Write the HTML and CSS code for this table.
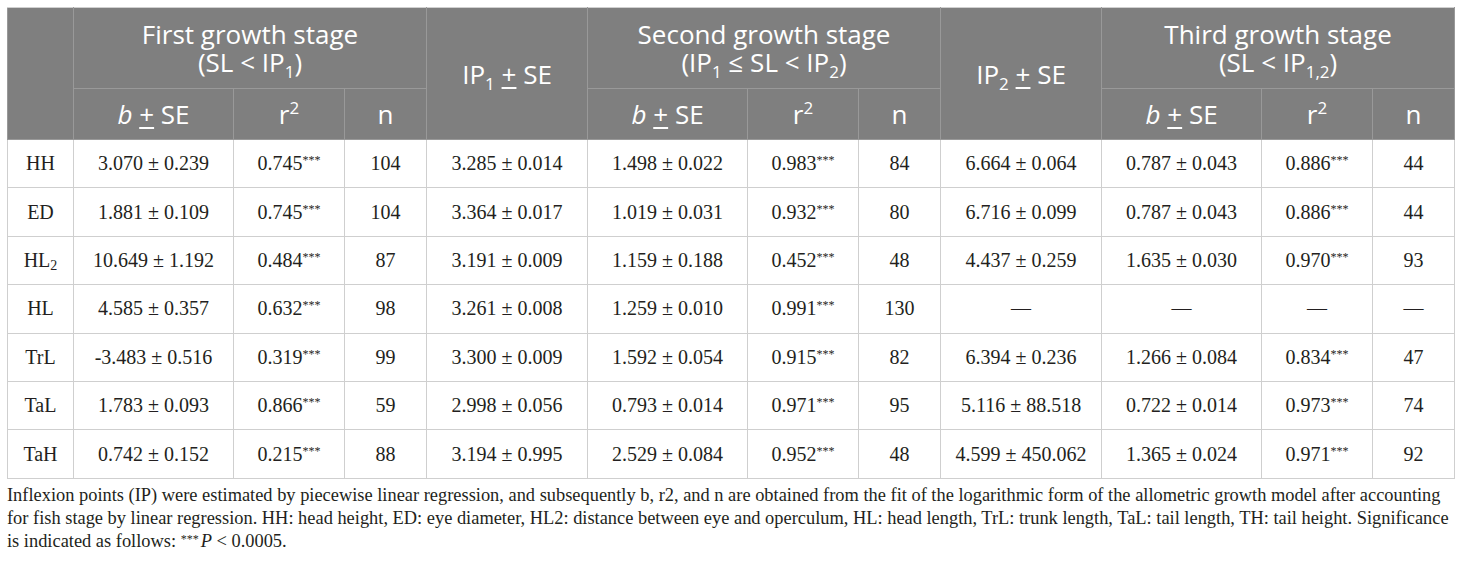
FILE: index.html
```html
<!DOCTYPE html>
<html lang="en">
<head>
  <meta charset="UTF-8">
  <title>Allometric growth table</title>
  <link rel="stylesheet" href="styles.css">
</head>
<body>
  <div class="wrap">
    <table class="growth">
      <colgroup>
        <col class="c-name">
        <col class="c-b"><col class="c-r"><col class="c-n">
        <col class="c-ip">
        <col class="c-b"><col class="c-r"><col class="c-n">
        <col class="c-ip">
        <col class="c-b"><col class="c-r"><col class="c-n">
      </colgroup>
      <thead>
        <tr class="head-top">
          <th rowspan="2"></th>
          <th colspan="3">First growth stage<br>(SL &lt; IP<sub>1</sub>)</th>
          <th rowspan="2">IP<sub>1</sub> <u>+</u> SE</th>
          <th colspan="3">Second growth stage<br>(IP<sub>1</sub> &le; SL &lt; IP<sub>2</sub>)</th>
          <th rowspan="2">IP<sub>2</sub> <u>+</u> SE</th>
          <th colspan="3">Third growth stage<br>(SL &lt; IP<sub>1,2</sub>)</th>
        </tr>
        <tr class="head-sub">
          <th><i>b</i> <u>+</u> SE</th><th>r<sup>2</sup></th><th>n</th>
          <th><i>b</i> <u>+</u> SE</th><th>r<sup>2</sup></th><th>n</th>
          <th><i>b</i> <u>+</u> SE</th><th>r<sup>2</sup></th><th>n</th>
        </tr>
      </thead>
      <tbody>
        <tr>
          <td>HH</td><td>3.070 ± 0.239</td><td>0.745<sup>***</sup></td><td>104</td>
          <td>3.285 ± 0.014</td><td>1.498 ± 0.022</td><td>0.983<sup>***</sup></td><td>84</td>
          <td>6.664 ± 0.064</td><td>0.787 ± 0.043</td><td>0.886<sup>***</sup></td><td>44</td>
        </tr>
        <tr>
          <td>ED</td><td>1.881 ± 0.109</td><td>0.745<sup>***</sup></td><td>104</td>
          <td>3.364 ± 0.017</td><td>1.019 ± 0.031</td><td>0.932<sup>***</sup></td><td>80</td>
          <td>6.716 ± 0.099</td><td>0.787 ± 0.043</td><td>0.886<sup>***</sup></td><td>44</td>
        </tr>
        <tr>
          <td>HL<sub>2</sub></td><td>10.649 ± 1.192</td><td>0.484<sup>***</sup></td><td>87</td>
          <td>3.191 ± 0.009</td><td>1.159 ± 0.188</td><td>0.452<sup>***</sup></td><td>48</td>
          <td>4.437 ± 0.259</td><td>1.635 ± 0.030</td><td>0.970<sup>***</sup></td><td>93</td>
        </tr>
        <tr>
          <td>HL</td><td>4.585 ± 0.357</td><td>0.632<sup>***</sup></td><td>98</td>
          <td>3.261 ± 0.008</td><td>1.259 ± 0.010</td><td>0.991<sup>***</sup></td><td>130</td>
          <td>—</td><td>—</td><td>—</td><td>—</td>
        </tr>
        <tr>
          <td>TrL</td><td>-3.483 ± 0.516</td><td>0.319<sup>***</sup></td><td>99</td>
          <td>3.300 ± 0.009</td><td>1.592 ± 0.054</td><td>0.915<sup>***</sup></td><td>82</td>
          <td>6.394 ± 0.236</td><td>1.266 ± 0.084</td><td>0.834<sup>***</sup></td><td>47</td>
        </tr>
        <tr>
          <td>TaL</td><td>1.783 ± 0.093</td><td>0.866<sup>***</sup></td><td>59</td>
          <td>2.998 ± 0.056</td><td>0.793 ± 0.014</td><td>0.971<sup>***</sup></td><td>95</td>
          <td>5.116 ± 88.518</td><td>0.722 ± 0.014</td><td>0.973<sup>***</sup></td><td>74</td>
        </tr>
        <tr>
          <td>TaH</td><td>0.742 ± 0.152</td><td>0.215<sup>***</sup></td><td>88</td>
          <td>3.194 ± 0.995</td><td>2.529 ± 0.084</td><td>0.952<sup>***</sup></td><td>48</td>
          <td>4.599 ± 450.062</td><td>1.365 ± 0.024</td><td>0.971<sup>***</sup></td><td>92</td>
        </tr>
      </tbody>
    </table>
    <p class="note">Inflexion points (IP) were estimated by piecewise linear regression, and subsequently b, r2, and n are obtained from the fit of the logarithmic form of the allometric growth model after accounting for fish stage by linear regression. HH: head height, ED: eye diameter, HL2: distance between eye and operculum, HL: head length, TrL: trunk length, TaL: tail length, TH: tail height. Significance is indicated as follows: <span class="stars">***</span><i>P</i> &lt; 0.0005.</p>
  </div>
</body>
</html>
```

FILE: styles.css
```css
body {
  margin: 0;
  background-color: #fff;
  color: #231f20;
}
.wrap {
  padding: 7px;
}
.growth {
  width: 1446px;
  border-collapse: collapse;
  table-layout: fixed;
  font-family: "Liberation Serif", serif;
  font-size: 20px;
}
.c-name { width: 66px; }
.c-b { width: 160px; }
.c-r { width: 111px; }
.c-n { width: 82px; }
.c-ip { width: 161px; }

.growth th {
  background-color: #7f7f7f;
  color: #fff;
  font-family: "Open Sans", sans-serif;
  font-weight: normal;
  font-size: 26px;
  line-height: 28px;
  border: 1px solid #999;
  padding: 0;
  text-align: center;
}
.growth thead tr:first-child th {
  border-top-color: #d0d0d0;
}
.head-top th {
  height: 80px;
}
.head-sub th {
  height: 50px;
}
.growth th sub {
  font-size: 17px;
  line-height: 0;
  vertical-align: -6px;
}
.growth th sup {
  font-size: 17px;
  line-height: 0;
  vertical-align: 10px;
}
.growth th u {
  text-underline-offset: 3px;
}
.growth td {
  border: 1px solid #cfcfcf;
  height: 47.4px;
  padding: 0;
  text-align: center;
}
.growth td sup {
  font-size: 12px;
  line-height: 0;
  vertical-align: 6px;
}
.growth td sub {
  font-size: 14px;
  line-height: 0;
  vertical-align: -3px;
}
.note {
  margin: 5px 0 0;
  font-family: "Liberation Serif", serif;
  font-size: 18.4px;
  line-height: 23px;
}
.stars {
  font-size: 12px;
  vertical-align: top;
  line-height: 18px;
  margin-right: 2px;
}
```
